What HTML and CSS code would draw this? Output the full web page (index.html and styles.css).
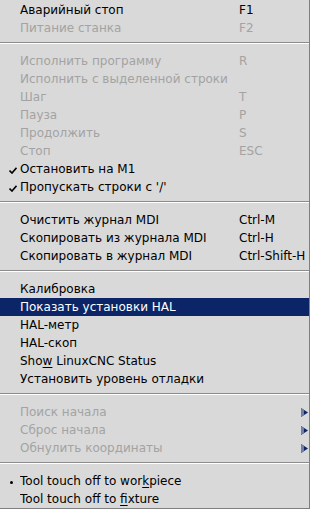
FILE: index.html
```html
<!DOCTYPE html>
<html lang="ru">
<head>
  <meta charset="UTF-8" />
  <title>Machine menu</title>
  <link rel="stylesheet" href="styles.css">
</head>
<body>
  <div class="menu">
    <div class="item"><span class="ind"></span><span class="label">Аварийный стоп</span><span class="accel">F1</span></div>
    <div class="item off"><span class="ind"></span><span class="label">Питание станка</span><span class="accel">F2</span></div>
    <div class="sep"></div>

    <div class="item off"><span class="ind"></span><span class="label">Исполнить программу</span><span class="accel">R</span></div>
    <div class="item off"><span class="ind"></span><span class="label">Исполнить с выделенной строки</span><span class="accel"></span></div>
    <div class="item off"><span class="ind"></span><span class="label">Шаг</span><span class="accel">T</span></div>
    <div class="item off"><span class="ind"></span><span class="label">Пауза</span><span class="accel">P</span></div>
    <div class="item off"><span class="ind"></span><span class="label">Продолжить</span><span class="accel">S</span></div>
    <div class="item off"><span class="ind"></span><span class="label">Стоп</span><span class="accel">ESC</span></div>
    <div class="item">
      <span class="ind"><svg class="check" width="8" height="7" viewBox="0 0 8 7"><path d="M0.5 3.5 L3 6 L7.5 0.8" fill="none" stroke="#000" stroke-width="1.6"/></svg></span>
      <span class="label">Остановить на M1</span><span class="accel"></span>
    </div>
    <div class="item">
      <span class="ind"><svg class="check" width="8" height="7" viewBox="0 0 8 7"><path d="M0.5 3.5 L3 6 L7.5 0.8" fill="none" stroke="#000" stroke-width="1.6"/></svg></span>
      <span class="label">Пропускать строки с '/'</span><span class="accel"></span>
    </div>
    <div class="sep"></div>

    <div class="item"><span class="ind"></span><span class="label">Очистить журнал MDI</span><span class="accel">Ctrl-M</span></div>
    <div class="item"><span class="ind"></span><span class="label">Скопировать из журнала MDI</span><span class="accel">Ctrl-H</span></div>
    <div class="item"><span class="ind"></span><span class="label">Скопировать в журнал MDI</span><span class="accel">Ctrl-Shift-H</span></div>
    <div class="sep"></div>

    <div class="item"><span class="ind"></span><span class="label">Калибровка</span><span class="accel"></span></div>
    <div class="item active"><span class="ind"></span><span class="label">Показать установки HAL</span><span class="accel"></span></div>
    <div class="item"><span class="ind"></span><span class="label">HAL-метр</span><span class="accel"></span></div>
    <div class="item"><span class="ind"></span><span class="label">HAL-скоп</span><span class="accel"></span></div>
    <div class="item"><span class="ind"></span><span class="label">Sho<u>w</u> LinuxCNC Status</span><span class="accel"></span></div>
    <div class="item"><span class="ind"></span><span class="label">Установить уровень отладки</span><span class="accel"></span></div>
    <div class="sep"></div>

    <div class="item off"><span class="ind"></span><span class="label">Поиск начала</span><span class="accel sub"><svg width="7" height="9" viewBox="0 0 7 9"><polygon points="0,0 7,4.5 0,9" fill="#0b2566"/><polygon points="0,0 3,2 3,7 0,9" fill="#6f7fa8"/></svg></span></div>
    <div class="item off"><span class="ind"></span><span class="label">Сброс начала</span><span class="accel sub"><svg width="7" height="9" viewBox="0 0 7 9"><polygon points="0,0 7,4.5 0,9" fill="#0b2566"/><polygon points="0,0 3,2 3,7 0,9" fill="#6f7fa8"/></svg></span></div>
    <div class="item off"><span class="ind"></span><span class="label">Обнулить координаты</span><span class="accel sub"><svg width="7" height="9" viewBox="0 0 7 9"><polygon points="0,0 7,4.5 0,9" fill="#0b2566"/><polygon points="0,0 3,2 3,7 0,9" fill="#6f7fa8"/></svg></span></div>
    <div class="sep"></div>

    <div class="item"><span class="ind"><span class="dot"></span></span><span class="label">Tool touch off to wor<u>k</u>piece</span><span class="accel"></span></div>
    <div class="item"><span class="ind"></span><span class="label">Tool touch off to <u>f</u>ixture</span><span class="accel"></span></div>
  </div>
</body>
</html>
```

FILE: styles.css
```css
body {
  margin: 0;
  background: #d9d9d9;
}

.menu {
  width: 309px;
  height: 507px;
  padding-top: 1px;
  background: #d9d9d9;
  border-right: 1px solid #7f7f7f;
  border-bottom: 1px solid #7f7f7f;
  font-family: "DejaVu Sans", sans-serif;
  font-size: 12px;
  color: #000;
}

.item {
  display: grid;
  grid-template-columns: 20px 219px 1fr;
  height: 18px;
  line-height: 18px;
  white-space: nowrap;
}

.item.off {
  color: #a3a3a3;
}

.item.active {
  background: #0b2566;
  color: #fff;
}

.ind {
  display: flex;
  align-items: center;
  justify-content: center;
  padding-left: 6px;
}

.check {
  display: block;
  margin-top: 2px;
}

.dot {
  width: 3px;
  height: 3px;
  border-radius: 50%;
  background: #000;
  margin-top: 3px;
  margin-right: 3px;
}

.label {
  overflow: hidden;
}

.sub {
  display: flex;
  align-items: center;
  justify-content: flex-end;
  padding-right: 1px;
}

.sub svg {
  display: block;
  margin-top: 1px;
}

u {
  text-decoration-thickness: 1px;
  text-underline-offset: 2px;
}

.sep {
  height: 2px;
  margin: 5px 0 8px;
  background: linear-gradient(#8c8c8c 50%, #fff 50%);
}
```
